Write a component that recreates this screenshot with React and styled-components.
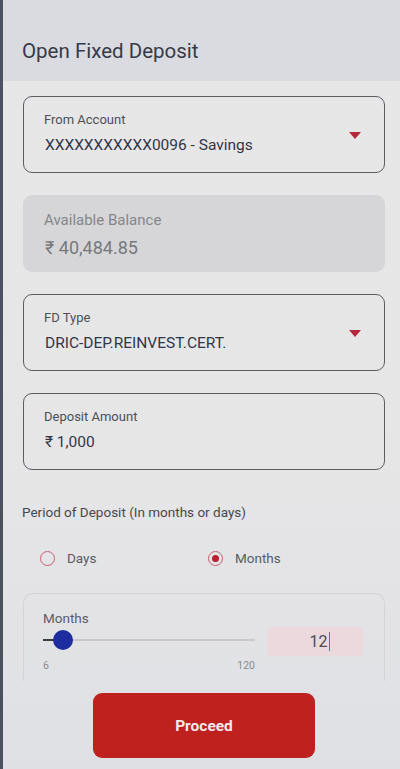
import React from "react";
import styled, { createGlobalStyle } from "styled-components";

const Global = createGlobalStyle`
  html, body { margin: 0; padding: 0; background: #e5e5e6; }
  * { box-sizing: border-box; }
  body { font-family: Roboto, "Noto Sans", "Liberation Sans", sans-serif; }
`;

const Screen = styled.div`
  width: 400px;
  height: 769px;
  overflow: hidden;
  display: flex;
  flex-direction: column;
  background: linear-gradient(180deg, #e7e7e8 0%, #e6e6e7 60%, #dfe0e4 100%);
  border-left: 3px solid #4c5160;
`;

const Header = styled.header`
  height: 81px;
  flex: none;
  background: #d9dbe0;
  padding: 37px 0 0 19px;
`;

const Title = styled.h1`
  margin: 0;
  font-size: 20.5px;
  line-height: 28px;
  font-weight: 400;
  color: #373a47;
`;

const Scroll = styled.div`
  flex: none;
  height: 600px;
  overflow: hidden;
  padding: 15px 15px 0 20px;
  display: flex;
  flex-direction: column;
  gap: 22px;
  & > * { flex: none; }
`;

const FieldCard = styled.div`
  height: 77px;
  border: 1px solid ${(p) => (p.$filled ? "transparent" : "#5b5d63")};
  background: ${(p) => (p.$filled ? "#d6d6d8" : "transparent")};
  border-radius: 9px;
  padding: ${(p) => (p.$filled ? "16px 20px 0" : "15px 20px 0")};
  position: relative;
`;

const FieldLabel = styled.div`
  font-size: ${(p) => (p.$big ? "15px" : "13px")};
  line-height: 16px;
  color: ${(p) => (p.$muted ? "#85868b" : "#4d4f55")};
`;

const FieldValue = styled.div`
  margin-top: ${(p) => (p.$big ? "10px" : "7px")};
  margin-left: 1px;
  font-size: ${(p) => (p.$big ? "18px" : "15.5px")};
  line-height: 20px;
  color: ${(p) => (p.$muted ? "#77787d" : "#32364a")};
  font-weight: 400;
`;

const Caret = styled.svg`
  position: absolute;
  right: 23px;
  top: 35px;
`;

const PeriodSection = styled.section`
  display: flex;
  flex-direction: column;
`;

const PeriodTitle = styled.div`
  margin: 11px 0 0 -1px;
  font-size: 13.5px;
  line-height: 18px;
  color: #47494f;
`;

const RadioRow = styled.div`
  display: grid;
  grid-template-columns: 168px 1fr;
  margin-top: 29px;
  padding-left: 17px;
`;

const RadioItem = styled.label`
  display: flex;
  align-items: center;
  gap: 12px;
  font-size: 13.5px;
  color: #5a5c62;
`;

const RadioCircle = styled.span`
  width: 15px;
  height: 15px;
  border-radius: 50%;
  border: 1.6px solid #c5606e;
  display: flex;
  align-items: center;
  justify-content: center;
  &::after {
    content: "";
    width: 7px;
    height: 7px;
    border-radius: 50%;
    background: ${(p) => (p.$on ? "#b8202f" : "transparent")};
  }
`;

const SliderCard = styled.div`
  margin-top: 27px;
  height: 90px;
  border: 1px solid #d4d4d6;
  border-bottom: none;
  border-radius: 10px 10px 0 0;
  padding: 16px 20px 0 19px;
  display: grid;
  grid-template-columns: 212px 1fr;
  column-gap: 12px;
`;

const SliderCol = styled.div`
  display: flex;
  flex-direction: column;
`;

const SliderLabel = styled.div`
  font-size: 13.5px;
  line-height: 16px;
  color: #5b5d63;
`;

const Track = styled.div`
  position: relative;
  height: 2px;
  margin-top: 13px;
  background: #c9c9cc;
`;

const TrackFill = styled.div`
  position: absolute;
  left: 0;
  top: 0;
  height: 2px;
  background: #3a3d48;
`;

const Thumb = styled.div`
  position: absolute;
  top: -9px;
  width: 20px;
  height: 20px;
  margin-left: -10px;
  border-radius: 50%;
  background: #1d2c9e;
`;

const Scale = styled.div`
  display: flex;
  justify-content: space-between;
  margin-top: 19px;
  font-size: 10.5px;
  line-height: 12px;
  color: #8a8b90;
`;

const AmountInput = styled.div`
  margin-top: 17px;
  height: 29px;
  width: 96px;
  background: #ecd9dd;
  border-radius: 4px;
  display: flex;
  align-items: center;
  justify-content: flex-end;
  padding-right: 33px;
  font-size: 16px;
  color: #4a4c52;
`;

const Cursor = styled.span`
  display: inline-block;
  width: 1.5px;
  height: 19px;
  background: #3d8a8a;
  margin-left: 1px;
`;

const Footer = styled.div`
  flex: 1;
  display: flex;
  justify-content: center;
  padding: 12px 0 0 0;
`;

const ProceedButton = styled.button`
  width: 222px;
  height: 65px;
  margin-left: 5px;
  border: none;
  border-radius: 9px;
  background: #be211e;
  color: #f4eaea;
  font-family: inherit;
  font-size: 15.5px;
  font-weight: 700;
`;

function Field({ label, value, select }) {
  return (
    <FieldCard>
      <FieldLabel>{label}</FieldLabel>
      <FieldValue>{value}</FieldValue>
      {select && (
        <Caret width="12" height="7" viewBox="0 0 12 7">
          <path d="M0 0 H12 L6 7 Z" fill="#b3283b" />
        </Caret>
      )}
    </FieldCard>
  );
}

export default function App() {
  const min = 6, max = 120, val = 12;
  const pct = ((val - min) / (max - min)) * 100;
  const pos = `calc(${pct}% + 9px)`;
  return (
    <>
      <Global />
      <Screen>
        <Header>
          <Title>Open Fixed Deposit</Title>
        </Header>
        <Scroll>
          <Field label="From Account" value="XXXXXXXXXXX0096 - Savings" select />
          <FieldCard $filled>
            <FieldLabel $big $muted>Available Balance</FieldLabel>
            <FieldValue $big $muted>₹ 40,484.85</FieldValue>
          </FieldCard>
          <Field label="FD Type" value="DRIC-DEP.REINVEST.CERT." select />
          <Field label="Deposit Amount" value="₹ 1,000" />
          <PeriodSection>
            <PeriodTitle>Period of Deposit (In months or days)</PeriodTitle>
            <RadioRow>
              <RadioItem>
                <RadioCircle />
                Days
              </RadioItem>
              <RadioItem>
                <RadioCircle $on />
                Months
              </RadioItem>
            </RadioRow>
            <SliderCard>
              <SliderCol>
                <SliderLabel>Months</SliderLabel>
                <Track>
                  <TrackFill style={{ width: pos }} />
                  <Thumb style={{ left: pos }} />
                </Track>
                <Scale>
                  <span>6</span>
                  <span>120</span>
                </Scale>
              </SliderCol>
              <AmountInput>
                12
                <Cursor />
              </AmountInput>
            </SliderCard>
          </PeriodSection>
        </Scroll>
        <Footer>
          <ProceedButton>Proceed</ProceedButton>
        </Footer>
      </Screen>
    </>
  );
}
